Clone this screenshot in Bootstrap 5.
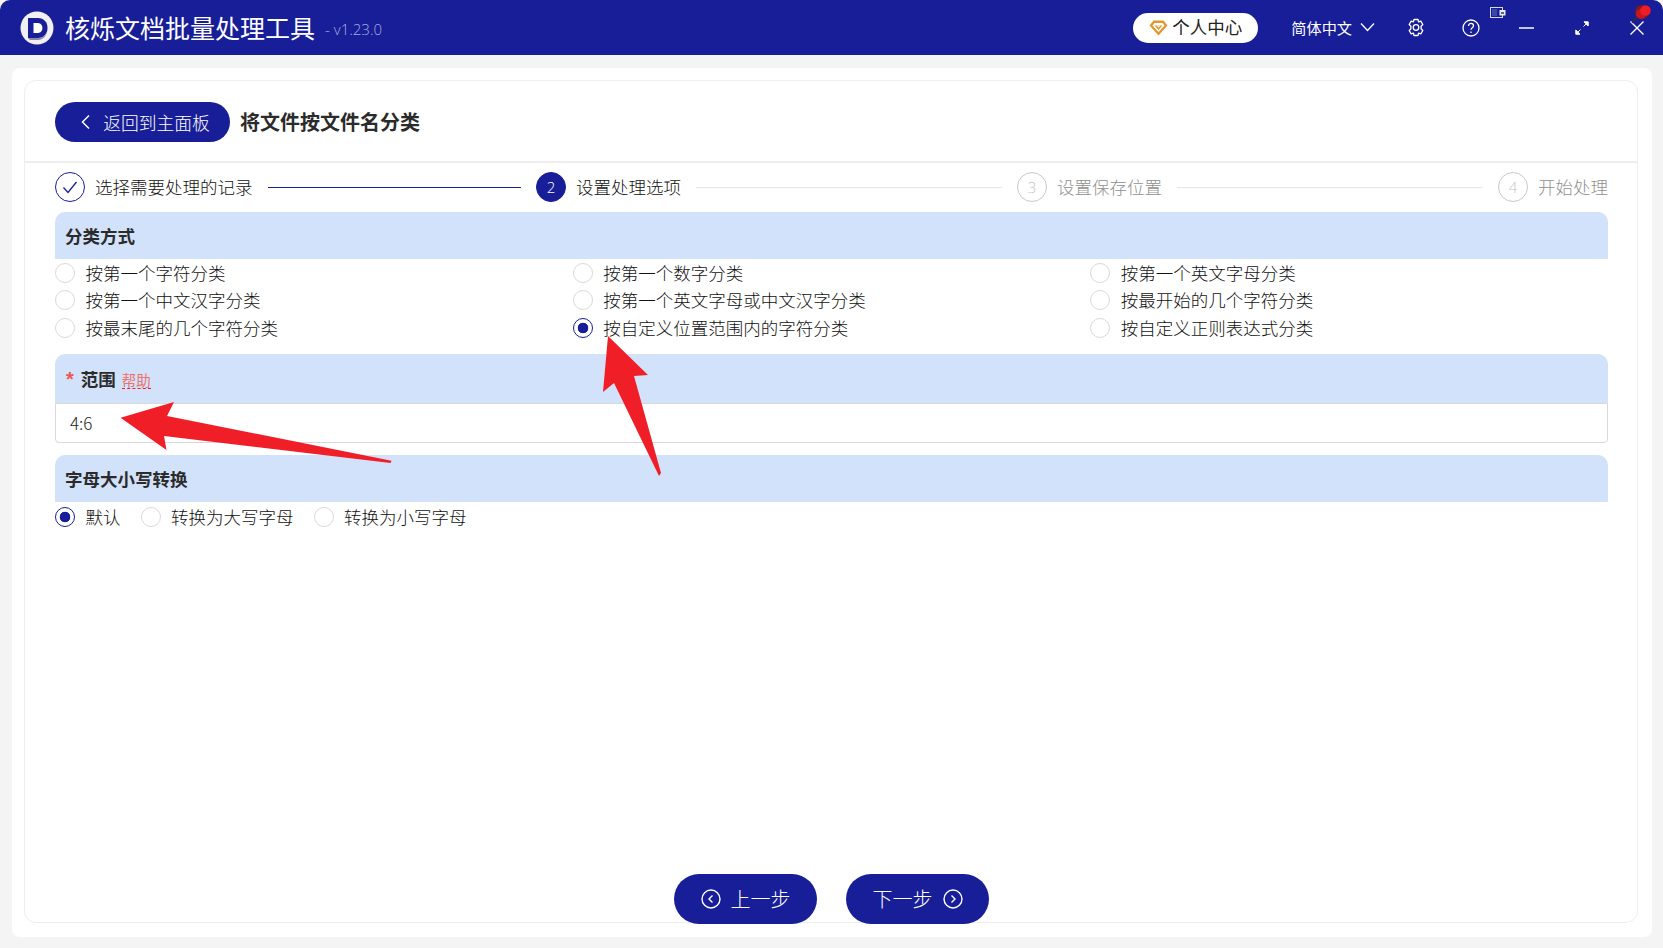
<!DOCTYPE html>
<html lang="zh-CN">
<head>
    <meta charset="UTF-8">
    <title>核烁文档批量处理工具</title>
    <link href="https://cdn.jsdelivr.net/npm/bootstrap@5.3.2/dist/css/bootstrap.min.css" rel="stylesheet">
    <style>
        html, body {
            height: 948px;
            overflow: hidden;
        }
        body {
            position: relative;
            background-color: #f4f4f4;
            font-family: "Noto Sans CJK SC", "Liberation Sans", sans-serif;
            font-size: 17.5px;
            font-weight: 300;
            color: #111;
        }
        .title-bar {
            height: 55px;
            background-color: #181e97;
            border-radius: 10px 10px 0 0;
            padding-left: 20px;
            color: #fff;
        }
        .app-name {
            font-size: 25px;
            font-weight: 400;
            margin-left: 11px;
            line-height: 1;
        }
        .app-ver {
            font-size: 15px;
            color: #a9abdb;
            margin-left: 10px;
            margin-top: 4px;
            font-family: "Open Sans", sans-serif;
        }
        .user-pill {
            width: 125px;
            height: 30px;
            background: #fff;
            color: #222;
            border-radius: 15px;
            font-size: 17.5px;
            font-weight: 400;
        }
        .lang-box {
            font-size: 15.2px;
            font-weight: 400;
            margin-left: 33px;
            margin-right: 13px;
        }
        .bar-icon {
            width: 55px;
            height: 55px;
        }
        .bar-icon-first {
            margin-left: 1px;
        }
        .bar-icon-end {
            margin-right: -1px;
        }
        .tray-icon {
            position: absolute;
            left: 1490px;
            top: 7px;
        }
        .pin-icon {
            position: absolute;
            left: 1629px;
            top: 3px;
        }
        .outer-panel {
            position: absolute;
            left: 12px;
            right: 11px;
            top: 68px;
            bottom: 11px;
            background: #fff;
            border-radius: 8px;
            padding: 12px 14px 14px 12px;
        }
        .inner-panel {
            height: 100%;
            border: 1px solid #eeeeee;
            border-radius: 12px;
        }
        .head-row {
            height: 82px;
            padding-left: 30px;
            padding-top: 2px;
            border-bottom: 2px solid #eeeeee;
        }
        .back-btn {
            width: 175px;
            height: 40px;
            background: #181e97;
            color: #fff;
            font-size: 17.8px;
            font-weight: 300;
            padding: 0 0 0 4px;
            border: 0;
            gap: 10px;
        }
        .back-btn:hover {
            background: #181e97;
            color: #fff;
        }
        .page-title {
            font-size: 20px;
            font-weight: 700;
            margin-left: 10px;
            color: #2b2b2b;
        }
        .content-wrap {
            padding: 0 29px 0 30px;
        }
        .steps-row {
            height: 30px;
            margin-top: 9px;
            margin-bottom: 10px;
        }
        .step-cell {
            flex: 1 1 0;
            min-width: 0;
        }
        .step-cell.is-last {
            flex: 0 0 auto;
        }
        .step-dot {
            width: 30px;
            height: 30px;
            border-radius: 50%;
            border: 1px solid #c9c9c9;
            color: #c4c4c4;
            font-size: 15px;
            font-family: "Open Sans", sans-serif;
            flex-shrink: 0;
        }
        .step-dot.is-done {
            border-color: #181e97;
        }
        .step-dot.is-now {
            background: #181e97;
            border-color: #181e97;
            color: #fff;
        }
        .step-name {
            margin-left: 10px;
            white-space: nowrap;
        }
        .step-name.is-off {
            color: #8f8f8f;
        }
        .step-line {
            flex-grow: 1;
            height: 1px;
            margin: 0 15px;
            background: #e6e6e6;
        }
        .step-line.is-done {
            background: #181e97;
        }
        .sect-head {
            height: 47px;
            background: #d2e2fb;
            border-radius: 10px 10px 0 0;
            padding-left: 10px;
            padding-top: 2px;
            font-weight: 700;
            color: #2b2b2b;
        }
        .sect-head-tall {
            height: 49px;
            margin-top: 12px;
        }
        .sect-head-last {
            margin-top: 12px;
        }
        .req-mark {
            color: #f0544c;
            margin-right: 7px;
            margin-left: 1px;
            font-weight: 700;
            font-size: 20px;
            font-family: "Liberation Sans", sans-serif;
        }
        .help-link {
            font-size: 14.5px;
            font-weight: 400;
            color: #f0706a;
            margin-left: 6px;
            border-bottom: 1px dashed #e8202a;
            line-height: 1.15;
            margin-top: 3px;
        }
        .opt-row {
            height: 27.5px;
        }
        .opt-item {
            display: flex;
            align-items: center;
            height: 27.5px;
            margin: 0;
            padding: 0;
            min-height: 0;
        }
        .opt-item .form-check-input {
            width: 20px;
            height: 20px;
            margin: 0 10.5px 0 0;
            float: none;
            border: 1px solid #d9d9d9;
            background-color: #fff;
        }
        .opt-item .form-check-input:checked {
            border: 1.5px solid #181e97;
            background-color: #fff;
            background-image: radial-gradient(circle, #181e97 0, #181e97 5px, transparent 5.6px);
        }
        .range-input {
            height: 40px;
            border: 1px solid #d9d9d9;
            border-radius: 0 0 4px 4px;
            padding: 0 14px;
            font-size: 17px;
            font-weight: 300;
            color: #222;
        }
        .case-row {
            margin-top: 2px;
            gap: 20px;
        }
        .foot-row {
            margin-top: auto;
            margin-bottom: -2px;
            gap: 29px;
        }
        .step-btn {
            width: 143px;
            height: 50px;
            background: #181e97;
            color: #fff;
            font-size: 20px;
            font-weight: 300;
            border: 0;
            padding: 0;
            gap: 10px;
        }
        .step-btn:hover {
            background: #181e97;
            color: #fff;
        }
        .mark-layer {
            position: absolute;
            left: 0;
            top: 0;
            pointer-events: none;
        }
    </style>
</head>
<body>

<div class="title-bar d-flex align-items-center">
    <svg width="34" height="34" viewBox="0 0 34 34">
        <circle cx="17" cy="17" r="16.5" fill="#f1eff3"/>
        <path d="M8 7h10c6 0 9.500 4.400 9.500 10s-3.500 10-9.500 10H8z" fill="#181e97"/>
        <path d="M13.500 12h4c3.200 0 4.900 2.200 4.900 5s-1.700 5-4.900 5h-4z" fill="#fff"/>
        <path d="M8 27h10c6 0 9.500-4.400 9.500-10 0 7-4 12-9.500 12H10z" fill="#8d84a8"/>
    </svg>
    <span class="app-name">核烁文档批量处理工具</span>
    <span class="app-ver">- v1.23.0</span>

    <div class="user-pill d-flex align-items-center justify-content-center gap-1 ms-auto">
        <svg width="19" height="16" viewBox="0 0 19 16">
            <path d="M4.500 .5h10l4 5-9 10-9-10z" fill="#e0982f"/>
            <path d="M5.500 3h8l2 2.500-6 6.500-6-6.500z" fill="#fff"/>
            <path d="M5.500 5.500h8L9.500 10z" fill="#e0982f"/>
            <path d="M7.500 5.500h4L9.500 7.500z" fill="#fff"/>
        </svg>
        <span>个人中心</span>
    </div>
    <div class="lang-box d-flex align-items-center gap-2">
        <span>简体中文</span>
        <svg width="15" height="10" viewBox="0 0 15 10"><path d="M1 1.500l6.500 7 6.500-7" fill="none" stroke="#fff" stroke-width="1.300"/></svg>
    </div>
    <div class="bar-icon d-flex align-items-center justify-content-center">
        <svg width="18" height="19" viewBox="0 0 18 19" fill="none" stroke="#fff" stroke-width="1.300" stroke-linejoin="round">
            <path d="M7 1.500h4l.6 2.300 2.200-.7 2 3.400-1.700 1.700v2.600l1.700 1.700-2 3.400-2.200-.7-.6 2.300H7l-.6-2.300-2.200.7-2-3.400 1.700-1.700V8.200L2.200 6.500l2-3.400 2.200.7z"/>
            <circle cx="9" cy="9.500" r="2.800"/>
        </svg>
    </div>
    <div class="bar-icon d-flex align-items-center justify-content-center">
        <svg width="18" height="18" viewBox="0 0 18 18" fill="none" stroke="#fff" stroke-width="1.300">
            <circle cx="9" cy="9" r="8"/>
            <path d="M6.500 7c0-1.600 1.100-2.600 2.500-2.600s2.500 1 2.500 2.300c0 1.900-2.500 2-2.500 4"/>
            <path d="M9 12.500v1.500"/>
        </svg>
    </div>
    <div class="bar-icon bar-icon-first d-flex align-items-center justify-content-center">
        <svg width="15" height="2" viewBox="0 0 15 2"><path d="M0 1h15" stroke="#fff" stroke-width="1.500"/></svg>
    </div>
    <div class="bar-icon d-flex align-items-center justify-content-center">
        <svg width="14" height="14" viewBox="0 0 14 14" fill="#fff" stroke="#fff" stroke-width="1">
            <path d="M9 .8h4.200V5z"/>
            <path d="M11 3L8.500 5.500"/>
            <path d="M5 13.200H.8V9z"/>
            <path d="M3 11l2.500-2.500"/>
        </svg>
    </div>
    <div class="bar-icon bar-icon-end d-flex align-items-center justify-content-center">
        <svg width="14" height="14" viewBox="0 0 14 14"><path d="M.5.500l13 13M13.500.500l-13 13" stroke="#fff" stroke-width="1.400"/></svg>
    </div>
</div>

<svg class="tray-icon" width="16" height="11" viewBox="0 0 16 11">
    <rect x=".5" y=".5" width="12" height="10" fill="#181e97" stroke="#d8d8e4"/>
    <rect x="2" y="2" width="5" height="7" fill="#3a49a8"/>
    <rect x="9.500" y="3" width="6" height="5.500" fill="#e8e8ee"/>
    <rect x="11" y="5" width="3" height="2" fill="#666"/>
</svg>
<svg class="pin-icon" width="24" height="22" viewBox="0 0 24 22">
    <path d="M3 20l5-6" stroke="#333" stroke-width="1.500"/>
    <circle cx="13" cy="9" r="7" fill="#7c1a22"/>
    <circle cx="12" cy="11" r="5" fill="#c9161d"/>
    <circle cx="16.500" cy="7.500" r="5.300" fill="#ee1c25"/>
</svg>

<div class="outer-panel">
    <div class="inner-panel d-flex flex-column">
        <div class="head-row d-flex align-items-center">
            <button type="button" class="btn back-btn rounded-pill d-flex align-items-center justify-content-center">
                <svg width="14" height="16" viewBox="0 0 14 16"><path d="M10 1.500L3.500 8l6.500 6.500" fill="none" stroke="#fff" stroke-width="1.500"/></svg>
                <span>返回到主面板</span>
            </button>
            <span class="page-title">将文件按文件名分类</span>
        </div>

        <div class="content-wrap d-flex flex-column flex-grow-1">
            <div class="steps-row d-flex align-items-center">
                <div class="step-cell d-flex align-items-center">
                    <div class="step-dot is-done d-flex align-items-center justify-content-center">
                        <svg width="16" height="13" viewBox="0 0 16 13"><path d="M1.500 6.500l4.500 5 8.500-10.500" fill="none" stroke="#181e97" stroke-width="1.300"/></svg>
                    </div>
                    <span class="step-name">选择需要处理的记录</span>
                    <div class="step-line is-done"></div>
                </div>
                <div class="step-cell d-flex align-items-center">
                    <div class="step-dot is-now d-flex align-items-center justify-content-center">2</div>
                    <span class="step-name">设置处理选项</span>
                    <div class="step-line"></div>
                </div>
                <div class="step-cell d-flex align-items-center">
                    <div class="step-dot d-flex align-items-center justify-content-center">3</div>
                    <span class="step-name is-off">设置保存位置</span>
                    <div class="step-line"></div>
                </div>
                <div class="step-cell is-last d-flex align-items-center">
                    <div class="step-dot d-flex align-items-center justify-content-center">4</div>
                    <span class="step-name is-off">开始处理</span>
                </div>
            </div>

            <div class="sect-head d-flex align-items-center">分类方式</div>
            <div class="row g-0 opt-row">
                <div class="col-4"><label class="opt-item form-check"><input class="form-check-input" type="radio" name="sortway">按第一个字符分类</label></div>
                <div class="col-4"><label class="opt-item form-check"><input class="form-check-input" type="radio" name="sortway">按第一个数字分类</label></div>
                <div class="col-4"><label class="opt-item form-check"><input class="form-check-input" type="radio" name="sortway">按第一个英文字母分类</label></div>
            </div>
            <div class="row g-0 opt-row">
                <div class="col-4"><label class="opt-item form-check"><input class="form-check-input" type="radio" name="sortway">按第一个中文汉字分类</label></div>
                <div class="col-4"><label class="opt-item form-check"><input class="form-check-input" type="radio" name="sortway">按第一个英文字母或中文汉字分类</label></div>
                <div class="col-4"><label class="opt-item form-check"><input class="form-check-input" type="radio" name="sortway">按最开始的几个字符分类</label></div>
            </div>
            <div class="row g-0 opt-row">
                <div class="col-4"><label class="opt-item form-check"><input class="form-check-input" type="radio" name="sortway">按最末尾的几个字符分类</label></div>
                <div class="col-4"><label class="opt-item form-check"><input class="form-check-input" type="radio" name="sortway" checked>按自定义位置范围内的字符分类</label></div>
                <div class="col-4"><label class="opt-item form-check"><input class="form-check-input" type="radio" name="sortway">按自定义正则表达式分类</label></div>
            </div>

            <div class="sect-head sect-head-tall d-flex align-items-center">
                <span class="req-mark">*</span>范围<span class="help-link">帮助</span>
            </div>
            <input type="text" class="form-control range-input" value="4:6">

            <div class="sect-head sect-head-last d-flex align-items-center">字母大小写转换</div>
            <div class="case-row d-flex">
                <label class="opt-item form-check"><input class="form-check-input" type="radio" name="caseway" checked>默认</label>
                <label class="opt-item form-check"><input class="form-check-input" type="radio" name="caseway">转换为大写字母</label>
                <label class="opt-item form-check"><input class="form-check-input" type="radio" name="caseway">转换为小写字母</label>
            </div>

            <div class="foot-row d-flex justify-content-center">
                <button type="button" class="btn step-btn rounded-pill d-flex align-items-center justify-content-center">
                    <svg width="20" height="20" viewBox="0 0 20 20" fill="none" stroke="#fff" stroke-width="1.400"><circle cx="10" cy="10" r="9"/><path d="M11.500 6.500L8 10l3.500 3.500"/></svg>
                    <span>上一步</span>
                </button>
                <button type="button" class="btn step-btn rounded-pill d-flex align-items-center justify-content-center">
                    <span>下一步</span>
                    <svg width="20" height="20" viewBox="0 0 20 20" fill="none" stroke="#fff" stroke-width="1.400"><circle cx="10" cy="10" r="9"/><path d="M8.500 6.500L12 10l-3.500 3.500"/></svg>
                </button>
            </div>
        </div>
    </div>
</div>

<svg class="mark-layer" width="1663" height="948" viewBox="0 0 1663 948">
    <polygon points="120.500,417.700 174,402 167,416 391.500,460.700 390.600,463 164,436 166.500,450" fill="#f01f27"/>
    <polygon points="608,336 648,375 634,376 661,473 659,476 614,383 603,392" fill="#f01f27"/>
</svg>

<script src="https://cdn.jsdelivr.net/npm/bootstrap@5.3.2/dist/js/bootstrap.bundle.min.js"></script>
</body>
</html>
